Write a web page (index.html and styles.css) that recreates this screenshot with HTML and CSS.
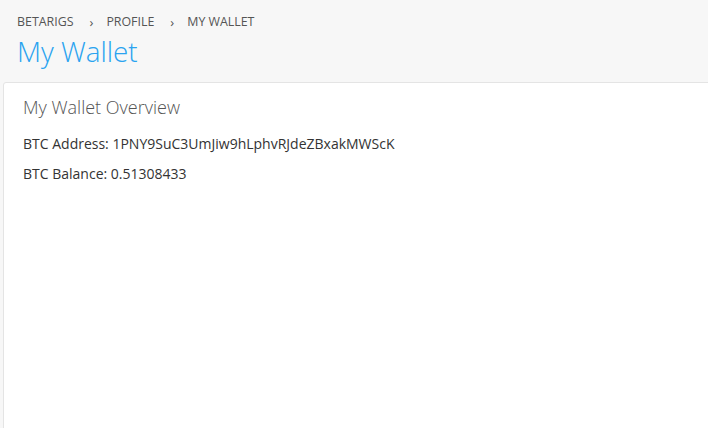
FILE: index.html
```html
<!DOCTYPE html>
<html>
<head>
<meta charset="utf-8">
<link rel="stylesheet" href="styles.css">
</head>
<body>
<div class="page">
  <header class="page-head">
    <nav class="crumbs">
      <span class="crumb">BETARIGS</span>
      <span class="sep">&#8250;</span>
      <span class="crumb">PROFILE</span>
      <span class="sep">&#8250;</span>
      <span class="crumb">MY WALLET</span>
    </nav>
    <h1 class="title">My Wallet</h1>
  </header>
  <section class="card">
    <h2 class="card-title">My Wallet Overview</h2>
    <p class="line">BTC Address: 1PNY9SuC3UmJiw9hLphvRJdeZBxakMWScK</p>
    <p class="line">BTC Balance: 0.51308433</p>
  </section>
</div>
</body>
</html>
```
FILE: styles.css
```css
html, body {
  margin: 0;
  padding: 0;
  height: 100%;
  background: #f7f7f7;
  font-family: "Open Sans", "Liberation Sans", sans-serif;
  overflow: hidden;
}
.page {
  display: flex;
  flex-direction: column;
  height: 100%;
}
.page-head {
  padding: 13px 17px 0 17px;
  height: 82px;
  box-sizing: border-box;
  flex: none;
}
.crumbs {
  display: flex;
  align-items: center;
  font-size: 12.4px;
  color: #555;
  height: 18px;
}
.sep {
  font-size: 13px;
  margin: 0 13px 0 16px;
  color: #555;
  line-height: 18px;
}
.crumb {
  line-height: 18px;
}
.title {
  margin: 3px 0 0 0;
  font-size: 27.8px;
  font-weight: 300;
  color: #2aa3f0;
  line-height: 34px;
}
.card {
  flex: 1;
  margin: 0 -10px -10px 3px;
  background: #fff;
  border: 1px solid #e4e4e4;
  border-radius: 3px;
  padding: 12px 19px;
}
.card-title {
  margin: 0 0 16px 0;
  font-size: 18px;
  font-weight: 300;
  color: #555;
  line-height: 24px;
}
.line {
  margin: 0 0 12px 0;
  font-size: 14px;
  color: #333;
  line-height: 18px;
}
```
